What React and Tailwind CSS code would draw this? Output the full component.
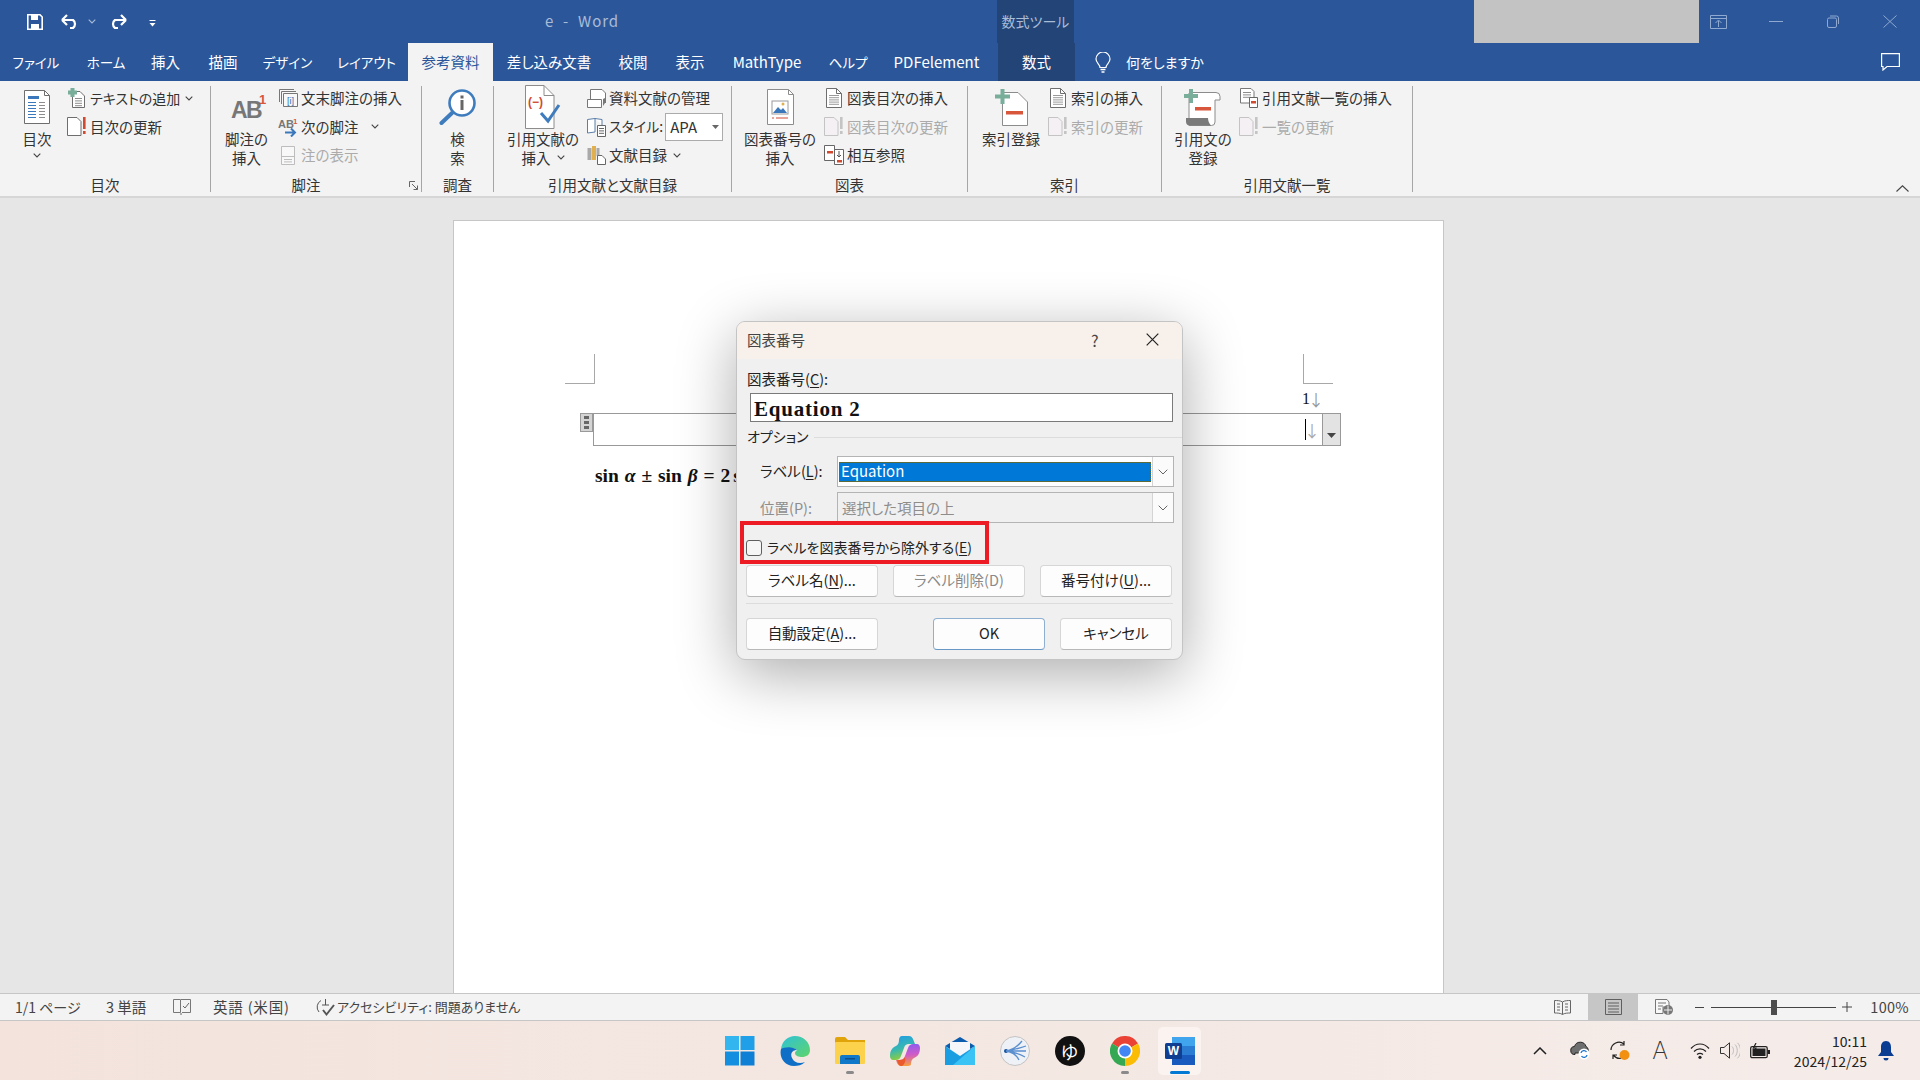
import React from "react";

const DocPage = ({ w = 16, h = 20, stroke = "#6e6e6e", fill = "#fff", children }) => (
  <svg width={w} height={h} viewBox={`0 0 ${w} ${h}`}>
    <path d={`M.5.5H${w - 5.5}L${w - 0.5} 5.5V${h - 0.5}H.5Z`} fill={fill} stroke={stroke} />
    <path d={`M${w - 5.5}.5V5.5H${w - 0.5}`} fill="none" stroke={stroke} />
    {children}
  </svg>
);

const Lines = ({ x = 3, y = 6, n = 5, w = 9, c = "#7a7a7a", gap = 2.4 }) => (
  <>
    {Array.from({ length: n }).map((_, i) => (
      <path key={i} d={`M${x} ${y + i * gap + 0.5}h${w}`} stroke={c} strokeWidth="1" />
    ))}
  </>
);

const Bang = ({ x, c = "#d04a32" }) => (
  <>
    <rect x={x} y="0" width="2.6" height="12" fill={c} />
    <rect x={x} y="14" width="2.6" height="3" fill={c} />
  </>
);

const UpdateIcon = ({ disabled }) => (
  <svg width="20" height="19" viewBox="0 0 20 19">
    <path d="M.5.5H10L14 4.5V18.5H.5Z" fill={disabled ? "#f4f0f4" : "#fff"} stroke={disabled ? "#c4c4c4" : "#6e6e6e"} />
    <Bang x="16" c={disabled ? "#c4c4c4" : "#d04a32"} />
  </svg>
);

const Chevron = ({ c = "#444" }) => (
  <svg width="8" height="5" viewBox="0 0 8 5">
    <path d="M.7.7 4 4 7.3.7" fill="none" stroke={c} strokeWidth="1.1" />
  </svg>
);

const Plus = ({ x = 0, y = 0, s = 14 }) => (
  <path d={`M${x + s / 2 - 2} ${y}h4v${s / 2 - 2}h${s / 2 - 2}v4h-${s / 2 - 2}v${s / 2 - 2}h-4v-${s / 2 - 2}h-${s / 2 - 2}v-4h${s / 2 - 2}Z`} fill="#78ae9a" />
);

const Underlined = ({ before, letter, after }) => (
  <span>
    {before}
    <span className="underline underline-offset-2">{letter}</span>
    {after}
  </span>
);

function SmallBtn({ icon, label, chevron, disabled, gap = "ml-[5px]", kana }) {
  return (
    <div className={`flex h-[28.5px] items-center whitespace-nowrap ${disabled ? "text-[#ababab]" : "text-[#333]"}`}>
      <div className="mr-[3px] flex w-[20px] items-center justify-center">{icon}</div>
      <span className={kana ? "text-[14px]" : ""}>{label}</span>
      {chevron && (
        <span className={`${gap} flex`}>
          <Chevron />
        </span>
      )}
    </div>
  );
}

function LargeBtn({ icon, lines, w, chevron, inlineChevron }) {
  return (
    <div className={`flex shrink-0 flex-col items-center text-[#333] ${w}`}>
      <div className="flex h-[46px] w-full items-center justify-center">{icon}</div>
      {lines.map((l, i) => (
        <div key={l} className="flex h-[18.5px] items-center whitespace-nowrap leading-[18.5px]">
          {l}
          {inlineChevron && i === lines.length - 1 && (
            <span className="ml-[6px] flex">
              <Chevron />
            </span>
          )}
        </div>
      ))}
      {chevron && (
        <div className="mt-[4px]">
          <Chevron />
        </div>
      )}
    </div>
  );
}

function Group({ w, label, children, launcher, pad }) {
  return (
    <div className={`flex h-[106px] shrink-0 flex-col border-r border-[#a6a6a6] ${w}`}>
      <div className={`-mt-[2px] flex h-[94px] ${pad}`}>{children}</div>
      <div className={`relative h-[14px] text-center leading-[14px] text-[#333] ${launcher ? "pr-[20px]" : ""}`}>
        {label}
        {launcher && (
          <svg className="absolute right-[3px] top-[3px]" width="9" height="9" viewBox="0 0 9 9">
            <path d="M.5 6V.5H6M3 3 8.5 8.5M8.5 4.5V8.5H4.5" fill="none" stroke="#666" />
          </svg>
        )}
      </div>
    </div>
  );
}

const tabs = [
  ["ファイル", "w-[72px] text-[13.5px]"],
  ["ホーム", "w-[68px] text-[13.5px]"],
  ["挿入", "w-[51px]"],
  ["描画", "w-[64px]"],
  ["デザイン", "w-[65px] text-[13.5px]"],
  ["レイアウト", "w-[83px] ml-[5px] text-[13.5px]"],
];
const tabs2 = [
  ["差し込み文書", "w-[112px]"],
  ["校閲", "w-[56px]"],
  ["表示", "w-[58px]"],
  ["MathType", "w-[96px] text-[15px]"],
  ["ヘルプ", "w-[66px] text-[13.5px]"],
  ["PDFelement", "w-[111px] mr-[6px] text-[15px]"],
];

function DlgButton({ children, w = "w-[132px]", disabled, ok }) {
  return (
    <div
      className={`flex h-[32px] items-center justify-center rounded-[4px] border bg-[#fdfdfd] pb-[2px] ${w} ${
        ok ? "border-[#8fb0d0] border-b-[#6a98c4]" : "border-[#d6d6d6] border-b-[#b8b8b8]"
      } ${disabled ? "text-[#8a8a8a]" : "text-[#222]"}`}
    >
      {children}
    </div>
  );
}

function Combo({ children, bg, sel }) {
  return (
    <div className={`ml-[99px] flex h-[31px] w-[337px] border border-[#b4b4b4] ${bg}`}>
      <div className="flex flex-1 items-center p-[1px] pt-[4px] pb-[4px]">
        {sel ? (
          <div className="flex h-[20px] w-full items-center border border-dotted border-[#5d6a3a] bg-[#0078d7] pl-[1px] text-[15px] text-white">{children}</div>
        ) : (
          <div className="pl-[3px] text-[#8d8d8d]">{children}</div>
        )}
      </div>
      <div className="flex w-[21px] items-center justify-center border-l border-[#d4d4d4] bg-[#fbfbfb]">
        <svg width="10" height="6" viewBox="0 0 10 6">
          <path d="M.7.7 5 5 9.3.7" fill="none" stroke="#666" />
        </svg>
      </div>
    </div>
  );
}

function Dialog() {
  return (
    <div className="absolute left-[736px] top-[321px] h-[339px] w-[447px] rounded-[9px] border border-[#c4c4c4] bg-[#f0f0f0] text-[14.5px] text-[#222] shadow-[0_14px_60px_rgba(0,0,0,0.33)]">
      <div className="flex h-[37px] items-center rounded-t-[8px] bg-[#f8f0ea] pb-[2px] pl-[10px] text-[#444]">
        <span>図表番号</span>
        <span className="ml-[286px] text-[16px]">?</span>
        <svg className="ml-[47px]" width="13" height="13" viewBox="0 0 13 13">
          <path d="M.7.7 12.3 12.3M12.3.7.7 12.3" stroke="#222" strokeWidth="1.2" />
        </svg>
      </div>
      <div className="pl-[1px]">
        <div className="flex h-[34px] items-center pl-[9px] pt-[5px]">
          <Underlined before="図表番号(" letter="C" after="):" />
        </div>
        <div className="ml-[12px] flex h-[29px] w-[423px] items-center border border-[#7a7a7a] bg-white pl-[3px] pt-[4px] font-['Liberation_Serif',serif] text-[21px] font-bold tracking-[0.8px] text-[#111]">
          Equation 2
        </div>
        <div className="flex h-[30px] items-center pl-[9px]">
          <span className="shrink-0 whitespace-nowrap pb-[2px] text-[14px]">オプション</span>
          <div className="ml-[5px] h-px w-[369px] bg-[#dcdcdc]" />
        </div>
        <div className="relative mt-[4px]">
          <div className="absolute left-[22px] top-[4px] whitespace-nowrap">
            <Underlined before="ラベル(" letter="L" after="):" />
          </div>
          <Combo bg="bg-white" sel>
            Equation
          </Combo>
        </div>
        <div className="relative mt-[5px]">
          <div className="absolute left-[22px] top-[5px] whitespace-nowrap text-[#8d8d8d]">位置(P):</div>
          <Combo bg="bg-[#f0f0f0]">選択した項目の上</Combo>
        </div>
        <div className="flex h-[42px] items-center pl-[8px] pt-[8px]">
          <div className="h-[16px] w-[16px] rounded-[3px] border border-[#5f5f5f] bg-[#f6f6f6]" />
          <span className="ml-[5px] whitespace-nowrap pb-[2px] text-[14px]">
            <Underlined before="ラベルを図表番号から除外する(" letter="E" after=")" />
          </span>
        </div>
        <div className="ml-[8px] flex gap-[15px]">
          <DlgButton>
            <Underlined before="ラベル名(" letter="N" after=")..." />
          </DlgButton>
          <DlgButton disabled>ラベル削除(D)</DlgButton>
          <DlgButton>
            <Underlined before="番号付け(" letter="U" after=")..." />
          </DlgButton>
        </div>
        <div className="ml-[8px] mt-[6px] h-px w-[427px] bg-[#dcdcdc]" />
        <div className="ml-[8px] mt-[14px] flex">
          <DlgButton>
            <Underlined before="自動設定(" letter="A" after=")..." />
          </DlgButton>
          <div className="ml-[55px] flex gap-[15px]">
            <DlgButton w="w-[112px]" ok>
              OK
            </DlgButton>
            <DlgButton w="w-[112px]">キャンセル</DlgButton>
          </div>
        </div>
      </div>
      {/* red annotation box */}
      <div className="absolute left-[3px] top-[199px] h-[43px] w-[249px] border-[4px] border-[#ed1c24]" />
    </div>
  );
}

function TaskIcon({ children, ind, active }) {
  return (
    <div className={`relative flex h-[48px] w-[43px] items-center justify-center rounded-[5px] ${active ? "bg-[#fbf3f0]" : ""}`}>
      {children}
      {ind && <div className="absolute bottom-[1px] h-[3px] w-[8px] rounded-full bg-[#8a8a8a]" />}
      {active && <div className="absolute bottom-[1px] h-[3px] w-[20px] rounded-full bg-[#0078d4]" />}
    </div>
  );
}

export default function App() {
  return (
    <div className="relative flex h-[1080px] w-[1920px] flex-col overflow-hidden bg-[#e6e6e6] font-['Noto_Sans_CJK_JP','Noto_Sans',sans-serif] text-[14px] [font-feature-settings:'palt']">
      {/* title bar */}
      <div className="flex h-[43px] shrink-0 items-center bg-[#2b579a]">
        <svg className="ml-[27px]" width="16" height="16" viewBox="0 0 16 16">
          <path d="M.8.8H13L15.2 3V15.2H.8Z" fill="none" stroke="#fff" strokeWidth="1.6" />
          <rect x="4" y="1" width="7" height="5" fill="#fff" />
          <rect x="4" y="10" width="8" height="5" fill="#fff" />
        </svg>
        <svg className="ml-[18px]" width="19" height="16" viewBox="0 0 19 16">
          <path d="M1 7h11a5 5 0 0 1 0 8H9M1 7l5-5M1 7l5 5" transform="translate(0 -1)" fill="none" stroke="#fff" strokeWidth="2.2" />
        </svg>
        <span className="ml-[8px] flex">
          <Chevron c="#a9bcd8" />
        </span>
        <svg className="ml-[12px]" width="19" height="16" viewBox="0 0 19 16">
          <path d="M18 7H7a5 5 0 0 0 0 8h3M18 7l-5-5M18 7l-5 5" transform="translate(0 -1)" fill="none" stroke="#fff" strokeWidth="2.2" />
        </svg>
        <svg className="ml-[22px] mt-[3px]" width="7" height="7" viewBox="0 0 7 7">
          <path d="M.5.5h6" stroke="#fff" />
          <path d="M.5 3h6L3.5 6.500Z" fill="#fff" />
        </svg>
        <span className="ml-[389px] w-[74px] whitespace-nowrap text-[15px] tracking-[1px] text-[#a9bcd8]">e&nbsp; - &nbsp;Word</span>
        <div className="ml-[378px] flex h-full w-[77px] items-center justify-center bg-[#234476] text-[14px] text-[#a9bcd8]">数式ツール</div>
        <div className="ml-[400px] h-full w-[225px] bg-[#c3c3c3]" />
        <svg className="ml-[11px]" width="17" height="14" viewBox="0 0 17 14">
          <path d="M.5.5h16v13H.5ZM.5 3.500h16M8.500 12V6M5.500 8l3-3 3 3" fill="none" stroke="#8fa9d1" />
        </svg>
        <div className="ml-[42px] h-px w-[14px] bg-[#8fa9d1]" />
        <svg className="ml-[44px]" width="12" height="13" viewBox="0 0 12 13">
          <rect x=".5" y="3" width="9" height="9.5" rx="1.5" fill="none" stroke="#8fa9d1" />
          <path d="M3 1h6.500a2 2 0 0 1 2 2V9" fill="none" stroke="#8fa9d1" />
        </svg>
        <svg className="ml-[44px]" width="14" height="13" viewBox="0 0 14 13">
          <path d="M.5.5 13.500 12.500M13.500.5.5 12.500" stroke="#8fa9d1" />
        </svg>
      </div>

      {/* tabs */}
      <div className="flex h-[38px] shrink-0 items-stretch bg-[#2b579a] text-[14.5px] text-white">
        {tabs.map(([t, c]) => (
          <div key={t} className={`flex items-center justify-center whitespace-nowrap ${c}`}>
            {t}
          </div>
        ))}
        <div className="flex w-[85px] items-center justify-center bg-[#f3f3f3] text-[#2b579a]">参考資料</div>
        {tabs2.map(([t, c]) => (
          <div key={t} className={`flex items-center justify-center whitespace-nowrap ${c}`}>
            {t}
          </div>
        ))}
        <div className="flex w-[77px] items-center justify-center bg-[#234476]">数式</div>
        <svg className="ml-[20px] self-center" width="16" height="21" viewBox="0 0 16 21">
          <path d="M5 15.500C5 12.500 1 11 1 7a7 7 0 0 1 14 0c0 4-4 5.500-4 8.500Z" fill="none" stroke="#fff" strokeWidth="1.2" />
          <path d="M5.500 17.500h5M6.500 20h3" stroke="#fff" strokeWidth="1.4" />
        </svg>
        <div className="ml-[15px] flex items-center text-[14px]">何をしますか</div>
        <svg className="ml-auto mr-[20px] self-center" width="19" height="18" viewBox="0 0 19 18">
          <path d="M.6.6H18.400V13.500H6L2 17V13.500H.6Z" fill="none" stroke="#fff" strokeWidth="1.2" />
        </svg>
      </div>

      {/* ribbon */}
      <div className="relative flex h-[117px] shrink-0 border-b-2 border-[#d6d6d6] bg-[#f3f3f3] pt-[5px] text-[14.5px]">
        <Group w="w-[211px]" label="目次" pad="pl-[7px]">
          <LargeBtn
            w="w-[60px]"
            lines={["目次"]}
            chevron
            icon={
              <DocPage w={26} h={34}>
                <rect x="4" y="6" width="11" height="3" fill="#3a78bb" />
                <Lines x={4} y={12} n={6} w={8} c="#3a78bb" gap={3} />
                <Lines x={15} y={12} n={6} w={6} c="#8c8c8c" gap={3} />
              </DocPage>
            }
          />
          <div>
            <SmallBtn
              label="テキストの追加"
              kana
              chevron
              icon={
                <svg width="18" height="20" viewBox="0 0 18 20">
                  <path d="M4.500 3.500H12L16.500 8V19.500H4.500Z" fill="#fff" stroke="#6e6e6e" />
                  <Lines x={7} y={10} n={4} w={7} c="#8c8c8c" gap={2.4} />
                  <Plus x={0} y={0} s={9} />
                </svg>
              }
            />
            <SmallBtn label="目次の更新" icon={<UpdateIcon />} />
          </div>
        </Group>
        <Group w="w-[211px]" label="脚注" pad="pl-[4px]" launcher>
          <LargeBtn
            w="w-[63px]"
            lines={["脚注の", "挿入"]}
            icon={
              <svg width="42" height="40" viewBox="0 0 42 40">
                <text x="5" y="31" fontSize="23" fontWeight="700" letterSpacing="-1.5" fill="#777" fontFamily="Liberation Sans, sans-serif">AB</text>
                <text x="33" y="17" fontSize="13" fontWeight="700" fill="#d8573c" fontFamily="Liberation Sans, sans-serif">1</text>
              </svg>
            }
          />
          <div>
            <SmallBtn
              label="文末脚注の挿入"
              icon={
                <svg width="19" height="18" viewBox="0 0 19 18">
                  <path d="M.5 13V.5H15M2.500 15V2.500H17M4.500 17.500V4.500H18.500V17.500Z" fill="#f8f8f8" stroke="#777" />
                  <text x="8" y="15" fontSize="9" fill="#2b6cb0" fontFamily="Liberation Sans, sans-serif">[i]</text>
                </svg>
              }
            />
            <SmallBtn
              label="次の脚注"
              chevron
              gap="ml-[13px]"
              icon={
                <svg width="20" height="20" viewBox="0 0 20 20">
                  <text x="0" y="11" fontSize="11" fontWeight="700" fill="#777" fontFamily="Liberation Sans, sans-serif">AB</text>
                  <text x="15" y="7" fontSize="8" fontWeight="700" fill="#d8573c" fontFamily="Liberation Sans, sans-serif">1</text>
                  <path d="M7 15.500h10M13 11.500l4 4-4 4" fill="none" stroke="#3a78bb" strokeWidth="2" />
                </svg>
              }
            />
            <SmallBtn
              label="注の表示"
              disabled
              icon={
                <svg width="14" height="19" viewBox="0 0 14 19">
                  <path d="M.5.5h13v18H.5ZM.5 10.500h13" fill="#f8f8f8" stroke="#bdbdbd" />
                  <Lines x={3} y={13} n={2} w={8} c="#bdbdbd" gap={2.4} />
                </svg>
              }
            />
          </div>
        </Group>
        <Group w="w-[72px]" label="調査">
          <LargeBtn
            w="w-[71px]"
            lines={["検", "索"]}
            icon={
              <svg width="38" height="37" viewBox="0 0 38 37">
                <circle cx="23" cy="14" r="12.500" fill="#fff" stroke="#3f7cbd" strokeWidth="2.6" />
                <path d="M13 24 2.500 34" stroke="#3f7cbd" strokeWidth="4" strokeLinecap="round" />
                <rect x="21.500" y="11" width="3" height="10" fill="#666" />
                <rect x="21.500" y="6.500" width="3" height="3" fill="#666" />
              </svg>
            }
          />
        </Group>
        <Group w="w-[238px]" label="引用文献と文献目録" pad="pl-[13px]">
          <LargeBtn
            w="w-[72px]"
            lines={["引用文献の", "挿入"]}
            inlineChevron
            icon={
              <svg width="36" height="44" viewBox="0 0 36 44">
                <path d="M.5.5H19L29 10.500V43.500H.5Z" fill="#fff" stroke="#8c8c8c" />
                <path d="M19 .5V10.500H29" fill="none" stroke="#8c8c8c" />
                <text x="3" y="21" fontSize="12" fontWeight="700" fill="#d04a32" fontFamily="Liberation Sans, sans-serif">(−)</text>
                <path d="M16 28l7 8L34 20" fill="none" stroke="#3f7cbd" strokeWidth="3" />
              </svg>
            }
          />
          <div className="ml-[7px]">
            <SmallBtn
              label="資料文献の管理"
              icon={
                <svg width="19" height="19" viewBox="0 0 19 19">
                  <path d="M3.500 11V.5H15L18.500 4V14" fill="#fff" stroke="#777" />
                  <path d="M.5 10.500H14.500V18.500H.5Z" fill="#fff" stroke="#777" />
                  <path d="M16 10v7l2-3V9Z" fill="#777" />
                </svg>
              }
            />
            <div className="flex items-center">
              <SmallBtn
                label="スタイル:"
                kana
                icon={
                  <svg width="19" height="20" viewBox="0 0 19 20">
                    <path d="M.5 2.500 8 1.500V15L.5 16ZM8 1.500 15 2.500V8" fill="#fff" stroke="#5c7fa8" />
                    <path d="M10.500 8.500H18.500V19.500H10.500Z" fill="#fff" stroke="#666" />
                    <Lines x={12} y={11} n={3} w={5} c="#666" gap={2.4} />
                  </svg>
                }
              />
              <div className="ml-[2px] flex h-[28px] w-[58px] items-center border border-[#ababab] bg-white pl-[4px] text-[15px] text-[#333]">
                APA
                <svg className="ml-[15px]" width="7" height="4" viewBox="0 0 7 4">
                  <path d="M0 0h7L3.500 4Z" fill="#666" />
                </svg>
              </div>
            </div>
            <SmallBtn
              label="文献目録"
              chevron
              gap="ml-[6px]"
              icon={
                <svg width="19" height="20" viewBox="0 0 19 20">
                  <rect x=".5" y="3" width="4" height="12" fill="#a9a9a9" />
                  <rect x="5" y="1" width="4" height="14" fill="#e0b050" />
                  <rect x="9.500" y="3" width="3" height="8" fill="#a9a9a9" />
                  <path d="M10.500 10.500H15L18.500 14V19.500H10.500Z" fill="#fff" stroke="#666" />
                </svg>
              }
            />
          </div>
        </Group>
        <Group w="w-[236px]" label="図表" pad="pl-[10px]">
          <LargeBtn
            w="w-[76px]"
            lines={["図表番号の", "挿入"]}
            icon={
              <DocPage w={27} h={36} stroke="#8c8c8c">
                <rect x="5" y="12" width="16" height="13" fill="#fff" stroke="#9a9a9a" />
                <path d="M6 24l5-6 3 3 2-2 4 5Z" fill="#3a78bb" />
                <circle cx="16" cy="15" r="1.500" fill="#e0b050" />
                <path d="M5 29h2M9 29h12" stroke="#d04a32" />
              </DocPage>
            }
          />
          <div className="ml-[6px]">
            <SmallBtn
              label="図表目次の挿入"
              icon={
                <DocPage w={16} h={20}>
                  <Lines x={3} y={7} n={5} w={10} c="#9a9a9a" gap={2.2} />
                </DocPage>
              }
            />
            <SmallBtn label="図表目次の更新" disabled icon={<UpdateIcon disabled />} />
            <SmallBtn
              label="相互参照"
              icon={
                <svg width="20" height="20" viewBox="0 0 20 20">
                  <path d="M.5.5h10v15H.5Z" fill="#fff" stroke="#666" />
                  <rect x="3" y="6" width="6" height="2.500" fill="#d04a32" />
                  <path d="M10.500 4.500h9v15h-9Z" fill="#fff" stroke="#666" />
                  <rect x="13" y="15" width="5" height="2.500" fill="#d04a32" />
                  <path d="M15 6v6M13 10l2 2 2-2" fill="none" stroke="#555" />
                </svg>
              }
            />
          </div>
        </Group>
        <Group w="w-[194px]" label="索引" pad="pl-[10px]">
          <LargeBtn
            w="w-[66px]"
            lines={["索引登録"]}
            icon={
              <svg width="33" height="37" viewBox="0 0 33 37">
                <path d="M7.500 3.500H23L32.500 13V36.500H7.500Z" fill="#fff" stroke="#8c8c8c" />
                <rect x="11" y="22" width="17" height="3.500" fill="#d8573c" />
                <Plus x={0} y={0} s={15} />
              </svg>
            }
          />
          <div className="ml-[4px]">
            <SmallBtn
              label="索引の挿入"
              icon={
                <DocPage w={16} h={20}>
                  <Lines x={3} y={7} n={5} w={10} c="#9a9a9a" gap={2.2} />
                </DocPage>
              }
            />
            <SmallBtn label="索引の更新" disabled icon={<UpdateIcon disabled />} />
          </div>
        </Group>
        <Group w="w-[251px]" label="引用文献一覧" pad="pl-[11px]">
          <LargeBtn
            w="w-[60px]"
            lines={["引用文の", "登録"]}
            icon={
              <svg width="38" height="37" viewBox="0 0 38 37">
                <path d="M6 3.500H32a4 4 0 0 1 4 4V11H31V33a3.500 3.500 0 0 1-3.500 3.500H5V4" fill="#fff" stroke="#8c8c8c" />
                <path d="M2 29H24c0 3 1 5 3 7.500H6a4 4 0 0 1-4-4Z" fill="#7a7a7a" />
                <rect x="11" y="18" width="16" height="3.500" fill="#d8573c" />
                <Plus x={0} y={0} s={14} />
              </svg>
            }
          />
          <div className="ml-[6px]">
            <SmallBtn
              label="引用文献一覧の挿入"
              icon={
                <svg width="19" height="20" viewBox="0 0 19 20">
                  <path d="M.5.5H11L14 3.500V15H.5Z" fill="#fff" stroke="#777" />
                  <Lines x={3} y={4} n={3} w={8} c="#8c8c8c" gap={2.4} />
                  <path d="M9.500 9.500h8v10h-8Z" fill="#fff" stroke="#666" />
                  <rect x="11" y="13" width="5" height="2.500" fill="#d04a32" />
                </svg>
              }
            />
            <SmallBtn label="一覧の更新" disabled icon={<UpdateIcon disabled />} />
          </div>
        </Group>
        {/* collapse arrow */}
        <svg className="absolute bottom-[4px] right-[11px]" width="13" height="7" viewBox="0 0 13 7">
          <path d="M.5 6.500 6.500.8 12.500 6.500" fill="none" stroke="#444" strokeWidth="1.1" />
        </svg>
      </div>

      {/* document */}
      <div className="min-h-0 flex-1 overflow-hidden pl-[453px] pt-[22px]">
        <div className="h-[800px] w-[991px] border border-[#c6c6c6] bg-white pl-[111px] pt-[133px]">
          <div className="w-[768px]">
            <div className="flex justify-between">
              <div className="h-[30px] w-[30px] border-b border-r border-[#a8a8a8]" />
              <div className="h-[30px] w-[30px] border-b border-l border-[#a8a8a8]" />
            </div>
            <div className="flex h-[29px] items-center justify-end pr-[9px] font-['Liberation_Serif',serif] text-[16px] text-[#111]">
              1<span className="-ml-[2px] font-['Noto_Sans_CJK_JP',sans-serif] text-[16px] text-[#999]">↓</span>
            </div>
            <div className="ml-[15px] flex">
              <div className="flex h-[19px] w-[13px] shrink-0 flex-col items-center justify-center gap-[2px] border border-[#9a9a9a] bg-[#d4d4d4]">
                <div className="h-[3px] w-[5px] bg-[#666]" />
                <div className="h-[3px] w-[5px] bg-[#666]" />
                <div className="h-[3px] w-[5px] bg-[#666]" />
              </div>
              <div className="flex h-[33px] w-[730px] shrink-0 items-center justify-end border border-[#999] bg-white pr-[2px]">
                <div className="mr-[-2px] h-[21px] w-px bg-black" />
                <span className="font-['Noto_Sans_CJK_JP',sans-serif] text-[16px] text-[#aaa]">↓</span>
              </div>
              <div className="flex h-[33px] w-[18px] shrink-0 items-end justify-center border border-l-0 border-[#999] bg-[#e3e3e3] pb-[7px]">
                <svg width="9" height="5" viewBox="0 0 9 5">
                  <path d="M0 0h9L4.500 5Z" fill="#444" />
                </svg>
              </div>
            </div>
            <div className="ml-[30px] mt-[18px] whitespace-nowrap font-['Liberation_Serif',serif] text-[19.500px] font-bold leading-[24px] text-[#111] [word-spacing:1px]">
              sin <i>α</i> ± sin <i>β</i> = 2<span className="ml-[3px]">s</span>
            </div>
          </div>
        </div>
      </div>

      {/* status bar */}
      <div className="flex h-[28px] shrink-0 items-center border-y border-[#c6c6c6] bg-[#f3f3f3] text-[14.5px] text-[#444]">
        <span className="ml-[15px] w-[91px] whitespace-nowrap text-[14px]">1/1 ページ</span>
        <span className="w-[67px] whitespace-nowrap">3 単語</span>
        <svg width="18" height="17" viewBox="0 0 18 17">
          <path d="M.5.5h7v13h-7ZM8 .5h9.500v13H9" fill="none" stroke="#777" />
          <path d="M10 7l2 2 4-5M8 14v2" fill="none" stroke="#666" />
        </svg>
        <span className="ml-[22px] w-[103px] whitespace-nowrap tracking-[0.8px]">英語 (米国)</span>
        <svg width="19" height="19" viewBox="0 0 19 19">
          <path d="M5 2.500A7.500 7.500 0 0 0 3 14M9.500 1v6M6 7h7" fill="none" stroke="#555" />
          <path d="M7 12l3.500 4.500L18 7" fill="none" stroke="#555" strokeWidth="2" />
        </svg>
        <span className="ml-[2px] whitespace-nowrap text-[13px]">アクセシビリティ: 問題ありません</span>
        <svg className="ml-auto" width="17" height="15" viewBox="0 0 17 15">
          <path d="M8.500 2C6.500.5 3 .5.500.5V13C3 13 6.500 13 8.500 14.500 10.500 13 14 13 16.500 13V.5C14 .5 10.500.5 8.500 2ZM8.500 2V14.500M3 4h3M3 7h3M3 10h3M11 4h3M11 7h3M11 10h3" fill="none" stroke="#666" />
        </svg>
        <div className="ml-[17px] flex h-full w-[50px] items-center justify-center bg-[#c6c6c6]">
          <svg width="17" height="16" viewBox="0 0 17 16">
            <path d="M.5.5h16v15H.5ZM3 4h11M3 7h11M3 10h11M3 13h11" fill="none" stroke="#5f5f5f" />
          </svg>
        </div>
        <svg className="ml-[17px]" width="18" height="16" viewBox="0 0 18 16">
          <path d="M.5.5H12L14 3V8H8V14.500H.5ZM3 4h8M3 7h5M3 10h3" fill="#f8f8f8" stroke="#777" />
          <circle cx="13" cy="11" r="5" fill="#777" />
          <path d="M9 11h8M13 6.500v9" stroke="#eee" />
        </svg>
        <div className="ml-[22px] h-px w-[9px] bg-[#444]" />
        <div className="relative ml-[7px] flex h-[15px] w-[125px] items-center">
          <div className="h-px w-full bg-[#444]" />
          <div className="absolute left-[60px] h-[15px] w-[6px] bg-[#4d4d4d]" />
        </div>
        <svg className="ml-[6px]" width="10" height="10" viewBox="0 0 10 10">
          <path d="M0 5h10M5 0v10" stroke="#444" />
        </svg>
        <span className="ml-[17px] mr-[11px] w-[40px] text-right tracking-[0.3px]">100%</span>
      </div>

      {/* taskbar */}
      <div className="flex h-[59px] shrink-0 items-center bg-gradient-to-r from-[#f3e3dc] to-[#f5ece9] text-[#222]">
        <div className="ml-[718px] flex gap-[12px]">
          <TaskIcon>
            <svg width="30" height="30" viewBox="0 0 30 30">
              <rect width="14" height="14" x="0" y="0" fill="#33b5f0" />
              <rect width="14" height="14" x="15.500" y="0" fill="#1e9fe8" />
              <rect width="14" height="14" x="0" y="15.500" fill="#148fdf" />
              <rect width="14" height="14" x="15.500" y="15.500" fill="#0f7fd6" />
            </svg>
          </TaskIcon>
          <TaskIcon>
            <svg width="30" height="30" viewBox="0 0 30 30">
              <defs>
                <linearGradient id="edgeA" x1="0" y1="0" x2="1" y2="1">
                  <stop offset="0" stopColor="#2fc2d8" />
                  <stop offset="1" stopColor="#5fd46a" />
                </linearGradient>
              </defs>
              <path d="M1 13C2 5 8 0 15 0c8 0 15 6 15 14 0 5-4 7-8 7-3 0-7-1-7-4 0-1 1-2 2-3-3-3-8-2-12 1-2 1-3 2-4-2Z" fill="url(#edgeA)" />
              <path d="M1 13c-2 8 3 17 13 17 4 0 8-1 11-4-5 2-11 1-13-4-2-4 0-8 5-8-4-4-13-3-16-1Z" fill="#0f6fc6" />
            </svg>
          </TaskIcon>
          <TaskIcon ind>
            <svg width="30" height="27" viewBox="0 0 30 27">
              <path d="M0 2a2 2 0 0 1 2-2h8l3 3h17v5H0Z" fill="#e0a30a" />
              <rect x="0" y="5" width="30" height="22" rx="1" fill="#fcd24d" />
              <path d="M5 20a2 2 0 0 1 2-2h16a2 2 0 0 1 2 2v7H5Z" fill="#0f78c8" />
              <rect x="10" y="21" width="10" height="1.500" fill="#0b4f8a" />
            </svg>
          </TaskIcon>
          <TaskIcon>
            <svg width="30" height="30" viewBox="0 0 30 30">
              <defs>
                <linearGradient id="copA" x1="0" y1="0" x2="0.3" y2="1">
                  <stop offset="0" stopColor="#1f9be8" />
                  <stop offset="0.6" stopColor="#39b8b0" />
                  <stop offset="1" stopColor="#8fce3c" />
                </linearGradient>
                <linearGradient id="copB" x1="0.4" y1="0" x2="0.5" y2="1">
                  <stop offset="0" stopColor="#8a5cf0" />
                  <stop offset="0.5" stopColor="#d05bc8" />
                  <stop offset="1" stopColor="#f7a03a" />
                </linearGradient>
              </defs>
              <path d="M12 0h7c2 0 3 1 4 3l2 5h-6c-3 0-4 1-5 4l-3 8c-1 3-3 4-5 4H3c-2 0-3-2-3-4 0-6 3-9 6-10 2-1 3-3 3-6 0-2 1-4 3-4Z" fill="url(#copA)" />
              <path d="M18 30h-7c-2 0-3-1-4-3l-1-3h3c3 0 5-1 6-4l3-8c1-3 3-4 5-4h4c2 0 3 2 3 4 0 6-3 9-6 10-2 1-3 3-3 6 0 1-1 2-3 2Z" fill="url(#copB)" />
              <path d="M10 24c2 0 4-1 5-3 1 3 0 7-3 9-3 0-4-2-5-6Z" fill="#ea5a2c" />
            </svg>
          </TaskIcon>
          <TaskIcon>
            <svg width="30" height="28" viewBox="0 0 30 28">
              <path d="M0 9 15 0l15 9-15 9Z" fill="#0b5cad" />
              <path d="M5 5h20v9l-10 6-10-6Z" fill="#f4f6f9" />
              <path d="M0 9 15 19 30 9V28H0Z" fill="#1b9de2" />
              <path d="M30 9V28H8Z" fill="#3cc3f5" />
            </svg>
          </TaskIcon>
          <TaskIcon>
            <svg width="30" height="30" viewBox="0 0 30 30">
              <circle cx="15" cy="15" r="14.500" fill="#eef1f5" stroke="#c3c3c3" />
              <circle cx="6" cy="15" r="2" fill="#16529c" />
              <path d="M6 15C13 14 18 10 22 5M6 15C13 14 20 12 26 10M6 15h20M6 15c7 1 14 3 19 6M6 15c7 1 11 5 13 9" fill="none" stroke="#5a8fd0" strokeWidth="1.300" />
            </svg>
          </TaskIcon>
          <TaskIcon>
            <div className="flex h-[30px] w-[30px] items-center justify-center rounded-full bg-[#111] text-[18px] leading-none text-white">ゆ</div>
          </TaskIcon>
          <TaskIcon ind>
            <svg width="30" height="30" viewBox="0 0 30 30">
              <path d="M15 15 2 7.500A15 15 0 0 1 28 7.500Z" fill="#ea4335" />
              <path d="M15 15 28 7.500A15 15 0 0 1 15 30Z" fill="#fbbc05" />
              <path d="M15 15 15 30A15 15 0 0 1 2 7.500Z" fill="#34a853" />
              <circle cx="15" cy="15" r="7.500" fill="#fff" />
              <circle cx="15" cy="15" r="5.800" fill="#4285f4" />
            </svg>
          </TaskIcon>
          <TaskIcon active>
            <svg width="30" height="28" viewBox="0 0 30 28">
              <rect x="7" y="0" width="23" height="9.500" fill="#41a5ee" />
              <rect x="7" y="9" width="23" height="9.500" fill="#2b7cd3" />
              <rect x="7" y="18" width="23" height="10" fill="#185abd" />
              <rect x="0" y="6" width="17" height="16" rx="1.500" fill="#103f91" />
              <text x="8.500" y="18" textAnchor="middle" fontSize="12" fontWeight="700" fill="#fff" fontFamily="Liberation Sans, sans-serif">W</text>
            </svg>
          </TaskIcon>
        </div>

        <svg className="ml-[332px]" width="14" height="8" viewBox="0 0 14 8">
          <path d="M1 7 7 1l6 6" fill="none" stroke="#222" strokeWidth="1.500" />
        </svg>
        <svg className="ml-[23px]" width="20" height="19" viewBox="0 0 20 19">
          <path d="M5 13.500a4 4 0 0 1-.5-8A6 6 0 0 1 16 5.500 4 4 0 0 1 17 12H5Z" fill="#6e6e6e" stroke="#222" />
          <circle cx="14" cy="13" r="5.500" fill="#fff" />
          <path d="M11 12a3 3 0 0 1 5.500-1M17 14a3 3 0 0 1-5.500 1" fill="none" stroke="#1a73d0" strokeWidth="1.300" />
        </svg>
        <svg className="ml-[20px]" width="20" height="20" viewBox="0 0 20 20">
          <path d="M1 9a8 8 0 0 1 13-6M14 0v4h-4M3 18l0-4h4M3 14c3 3 6 4 8 3" fill="none" stroke="#222" strokeWidth="1.200" />
          <circle cx="14.500" cy="14" r="5" fill="#f29111" />
        </svg>
        <span className="ml-[22px] w-[16px] text-center font-['Inter',sans-serif] text-[24px] font-extralight leading-none text-[#333]">A</span>
        <svg className="ml-[22px]" width="20" height="16" viewBox="0 0 20 16">
          <path d="M1 5.500C6-.5 14-.5 19 5.500M4 8.500c3.500-3.500 8.500-3.500 12 0M7 11.500c2-1.500 4-1.500 6 0" fill="none" stroke="#222" strokeWidth="1.200" />
          <circle cx="10" cy="14.300" r="1.600" fill="#222" />
        </svg>
        <svg className="ml-[10px]" width="20" height="17" viewBox="0 0 20 17">
          <path d="M.5 5.500H4L9.500.8V16.200L4 11.500H.5Z" fill="none" stroke="#333" />
          <path d="M12 4.500c2 2 2 6 0 8M15 2.500c3 3 3 9 0 12M17.500 .8c4 4 4 11.500 0 15.500" fill="none" stroke="#bbb" />
        </svg>
        <svg className="ml-[10px]" width="20" height="16" viewBox="0 0 20 16">
          <rect x=".7" y="3.700" width="16.500" height="11" rx="1.500" fill="none" stroke="#222" strokeWidth="1.300" />
          <rect x="2.500" y="5.500" width="13" height="7.500" fill="#222" />
          <rect x="17.500" y="7" width="2.500" height="4" fill="#222" />
          <path d="M6 0 3.500 5H6L4.500 9" fill="none" stroke="#222" strokeWidth="1.200" />
        </svg>
        <div className="ml-[9px] w-[88px] text-right text-[14px] leading-[20px]">
          <div>10:11</div>
          <div className="whitespace-nowrap">2024/12/25</div>
        </div>
        <svg className="ml-[11px]" width="16" height="20" viewBox="0 0 16 20">
          <path d="M8 0c3.500 0 5 3 5 6v5l3 4H0l3-4V6c0-3 1.500-6 5-6ZM5.500 17h5a2.500 2.500 0 0 1-5 0Z" fill="#0a3d91" />
        </svg>
      </div>

      <Dialog />
    </div>
  );
}
